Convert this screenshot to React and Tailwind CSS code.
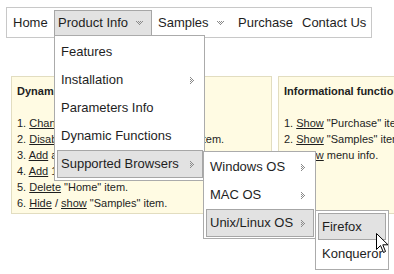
import React from "react";

function DownArrow() {
  return (
    <svg width="7" height="4" viewBox="0 0 7 4" className="block" shapeRendering="crispEdges">
      {[[0,0],[2,0],[4,0],[6,0],[1,1],[3,1],[5,1],[2,2],[4,2],[3,3]].map(([x,y],i)=>(
        <rect key={i} x={x} y={y} width="1" height="1" fill="#8a8a8a" />
      ))}
    </svg>
  );
}

function RightArrow() {
  return (
    <svg width="4" height="7" viewBox="0 0 4 7" className="block" shapeRendering="crispEdges">
      {[[0,0],[0,2],[0,4],[0,6],[1,1],[1,3],[1,5],[2,2],[2,4],[3,3]].map(([x,y],i)=>(
        <rect key={i} x={x} y={y} width="1" height="1" fill="#8a8a8a" />
      ))}
    </svg>
  );
}

function Item({ label, arrow, active }) {
  return (
    <div
      className={
        "flex items-center justify-between h-[28px] pl-[3px] pr-[8px] border " +
        (active ? "bg-[#e2e2e2] border-[#a6a6a6]" : "border-transparent")
      }
    >
      <span className="whitespace-nowrap">{label}</span>
      {arrow ? <RightArrow /> : null}
    </div>
  );
}

function U({ children }) {
  return <span className="underline">{children}</span>;
}

export default function App() {
  return (
    <div
      className="relative w-[394px] h-[274px] bg-white overflow-hidden text-[#1e1e1e]"
      style={{ fontFamily: '"Liberation Sans", Arial, sans-serif' }}
    >
      {/* top menu bar */}
      <div className="ml-[6px] mt-[7px] w-[366px] h-[31px] border border-[#c8c8c8] flex items-start pt-[2px] text-[13px]">
        <div className="w-[47px] h-[26px] flex items-center pl-[6px]">Home</div>
        <div className="w-[98px] h-[26px] flex items-center justify-between pl-[3px] pr-[8px] bg-[#e2e2e2] border border-[#a6a6a6]">
          <span>Product Info</span>
          <DownArrow />
        </div>
        <div className="w-[80px] h-[26px] flex items-center justify-between pl-[6px] pr-[8px]">
          <span>Samples</span>
          <DownArrow />
        </div>
        <div className="w-[64px] h-[26px] flex items-center pl-[6px]">Purchase</div>
        <div className="w-[72px] h-[26px] flex items-center pl-[6px] whitespace-nowrap">Contact Us</div>
      </div>

      {/* panels */}
      <div className="ml-[11px] mt-[38px] flex gap-[6px] text-[11px] leading-[16px]">
        <div className="w-[261px] h-[138px] shrink-0 bg-[#fffbe3] border border-[#e2ddc0] pl-[5px] pt-[6px]">
          <div className="font-bold">Dynamic Functions</div>
          <div className="h-[16px]" />
          <div className="whitespace-nowrap">1. <U>Change</U> "Product Info" item.</div>
          <div className="whitespace-nowrap">2. <U>Disable</U> "Supported Browsers" sub item.</div>
          <div className="whitespace-nowrap">3. <U>Add</U> a new item.</div>
          <div className="whitespace-nowrap">4. <U>Add</U> 10 items.</div>
          <div className="whitespace-nowrap">5. <U>Delete</U> "Home" item.</div>
          <div className="whitespace-nowrap">6. <U>Hide</U> / <U>show</U> "Samples" item.</div>
        </div>
        <div className="w-[200px] h-[138px] shrink-0 bg-[#fffbe3] border border-[#e2ddc0] pl-[5px] pt-[6px]">
          <div className="font-bold whitespace-nowrap">Informational functions</div>
          <div className="h-[16px]" />
          <div className="whitespace-nowrap">1. <U>Show</U> "Purchase" item info.</div>
          <div className="whitespace-nowrap">2. <U>Show</U> "Samples" item info.</div>
          <div className="whitespace-nowrap">3. <U>Show</U> menu info.</div>
        </div>
      </div>

      {/* submenu 1 */}
      <div className="absolute left-[54px] top-[35px] w-[151px] bg-white border border-[#ababab] pl-[2px] pr-[1px] pt-[2px] pb-[2px] text-[13px]">
        <Item label="Features" />
        <Item label="Installation" arrow />
        <Item label="Parameters Info" />
        <Item label="Dynamic Functions" />
        <Item label="Supported Browsers" arrow active />
      </div>

      {/* submenu 2 */}
      <div className="absolute left-[203px] top-[151px] w-[113px] bg-white border border-[#ababab] pl-[2px] pr-[1px] py-[1px] text-[13px]">
        <Item label="Windows OS" arrow />
        <Item label="MAC OS" arrow />
        <Item label="Unix/Linux OS" arrow active />
      </div>

      {/* submenu 3 */}
      <div className="absolute left-[315px] top-[210px] w-[74px] bg-white border border-[#ababab] pl-[2px] pr-[2px] py-[2px] text-[13px]">
        <div className="h-[27px] flex items-center pl-[3px] bg-[#e2e2e2] border border-[#a6a6a6]">Firefox</div>
        <div className="h-[27px] flex items-center pl-[3px] border border-transparent">Konqueror</div>
      </div>

      {/* cursor */}
      <svg className="absolute left-[376px] top-[233px]" width="13" height="21" viewBox="0 0 13 21">
        <path d="M0.5 0.5 L0.5 16.5 L4.5 12.5 L7.5 19.5 L9.5 18.5 L6.8 11.8 L12 11.8 Z" fill="#fff" stroke="#000" strokeWidth="1" strokeLinejoin="miter" />
      </svg>
    </div>
  );
}
